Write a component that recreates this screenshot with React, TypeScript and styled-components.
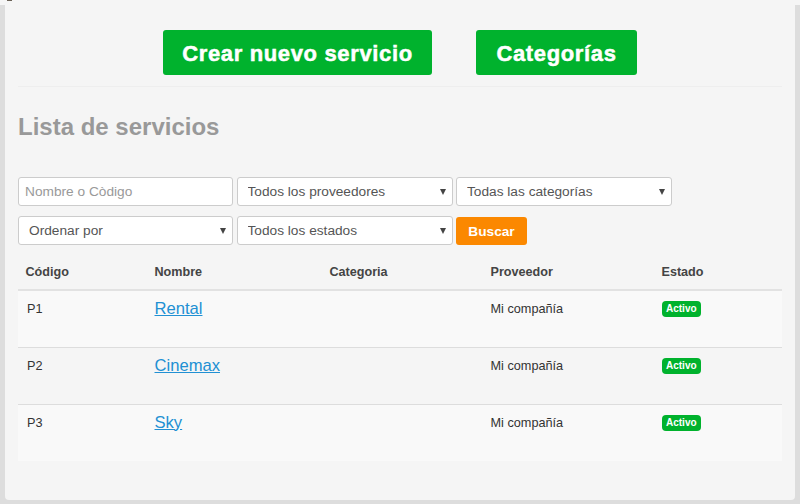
import React from "react";
import styled, { createGlobalStyle } from "styled-components";

const GlobalStyle = createGlobalStyle`
  html, body {
    margin: 0;
    padding: 0;
    height: 100%;
    background: #dddddd;
    font-family: "Liberation Sans", Arial, sans-serif;
  }
`;

const TopStrip = styled.div`
  height: 5px;
  padding-left: 7px;
  background: #f5f5f5;
`;

const TopTick = styled.div`
  width: 5px;
  height: 1px;
  background: #6b6257;
`;

const Panel = styled.div`
  box-sizing: border-box;
  width: 790px;
  height: 495px;
  margin: 0 5px;
  padding: 25px 13px 0;
  background: #f5f5f5;
  border-radius: 0 0 4px 4px;
`;

const Actions = styled.div`
  display: flex;
  justify-content: center;
  gap: 44px;
  padding-bottom: 11px;
  padding-right: 1px;
  border-bottom: 1px solid #eeeeee;
`;

const BigButton = styled.button<{ $width: number }>`
  width: ${(p) => p.$width}px;
  height: 45px;
  padding: 2px 0 0 1px;
  border: 0;
  border-radius: 3px;
  background: #00b22d;
  color: #ffffff;
  font: bold 22px "Liberation Sans", Arial, sans-serif;
  letter-spacing: 0.65px;
  -webkit-text-stroke: 0.5px #ffffff;
`;

const Title = styled.h2`
  margin: 25px 0 36px;
  font-size: 24px;
  line-height: 29px;
  font-weight: bold;
  color: #999999;
`;

const Filters = styled.div`
  display: grid;
  grid-template-columns: 215px 216px 216px;
  grid-auto-rows: 29px;
  column-gap: 3.5px;
  row-gap: 10px;
`;

const SearchInput = styled.input`
  box-sizing: border-box;
  width: 100%;
  height: 29px;
  padding: 0 6px;
  background: #ffffff;
  border: 1px solid #cccccc;
  border-radius: 3px;
  font: 13.7px "Liberation Sans", Arial, sans-serif;
  color: #555555;

  &::placeholder {
    color: #999999;
    opacity: 1;
  }
`;

const SelectBox = styled.div`
  position: relative;

  &::after {
    content: "";
    position: absolute;
    top: 12px;
    right: 7px;
    border-left: 3.5px solid transparent;
    border-right: 3.5px solid transparent;
    border-top: 6px solid #444444;
    pointer-events: none;
  }
`;

const Select = styled.select`
  appearance: none;
  box-sizing: border-box;
  width: 100%;
  height: 29px;
  padding: 0 10px;
  background: #ffffff;
  border: 1px solid #cccccc;
  border-radius: 3px;
  font: 13.7px "Liberation Sans", Arial, sans-serif;
  color: #555555;
`;

const SearchButton = styled.button`
  justify-self: start;
  align-self: end;
  width: 71px;
  height: 28px;
  padding: 0;
  border: 0;
  border-radius: 3px;
  background: #fb8800;
  color: #ffffff;
  font: bold 13.7px "Liberation Sans", Arial, sans-serif;
`;

const Table = styled.table`
  width: 764px;
  border-collapse: collapse;
  table-layout: fixed;
`;

const HeadCell = styled.th<{ $width: number }>`
  width: ${(p) => p.$width}px;
  height: 45px;
  box-sizing: border-box;
  padding: 9px 7.5px 0;
  border-bottom: 2px solid #e2e2e2;
  text-align: left;
  font-size: 12.6px;
  font-weight: bold;
  color: #444444;
`;

const Row = styled.tr<{ $striped: boolean }>`
  background: ${(p) => (p.$striped ? "#f9f9f9" : "transparent")};
`;

const Cell = styled.td<{ $top?: boolean }>`
  height: 57px;
  box-sizing: border-box;
  padding: 9px 7.5px 8px;
  vertical-align: top;
  border-top: ${(p) => (p.$top ? "0" : "1px solid #dddddd")};
  font-size: 12.7px;
  line-height: 17px;
  color: #333333;
`;

const TextCell = styled(Cell)`
  padding-top: 10px;
`;

const CodeText = styled.span`
  padding-left: 1.5px;
`;

const ServiceLink = styled.a`
  font-size: 16.6px;
  color: #2190d3;
  text-decoration: underline;
`;

const Badge = styled.span`
  display: inline-block;
  padding: 0 4.5px;
  height: 16px;
  line-height: 16px;
  border-radius: 4px;
  background: #00b22d;
  color: #ffffff;
  font-size: 10px;
  font-weight: bold;
`;

const services = [
  { code: "P1", name: "Rental" },
  { code: "P2", name: "Cinemax" },
  { code: "P3", name: "Sky" },
];

export default function App() {
  return (
    <>
      <GlobalStyle />
      <TopStrip>
        <TopTick />
      </TopStrip>
      <Panel>
        <Actions>
          <BigButton $width={269}>Crear nuevo servicio</BigButton>
          <BigButton $width={161}>Categorías</BigButton>
        </Actions>
        <Title>Lista de servicios</Title>
        <Filters>
          <SearchInput placeholder="Nombre o Còdigo" />
          <SelectBox>
            <Select defaultValue="p">
              <option value="p">Todos los proveedores</option>
            </Select>
          </SelectBox>
          <SelectBox>
            <Select defaultValue="c">
              <option value="c">Todas las categorías</option>
            </Select>
          </SelectBox>
          <SelectBox>
            <Select defaultValue="o">
              <option value="o">Ordenar por</option>
            </Select>
          </SelectBox>
          <SelectBox>
            <Select defaultValue="e">
              <option value="e">Todos los estados</option>
            </Select>
          </SelectBox>
          <SearchButton>Buscar</SearchButton>
        </Filters>
        <Table>
          <thead>
            <tr>
              <HeadCell $width={129}>Código</HeadCell>
              <HeadCell $width={175}>Nombre</HeadCell>
              <HeadCell $width={161}>Categoria</HeadCell>
              <HeadCell $width={171}>Proveedor</HeadCell>
              <HeadCell $width={128}>Estado</HeadCell>
            </tr>
          </thead>
          <tbody>
            {services.map((s, i) => (
              <Row key={s.code} $striped={i % 2 === 0}>
                <TextCell $top={i === 0}>
                  <CodeText>{s.code}</CodeText>
                </TextCell>
                <Cell $top={i === 0}>
                  <ServiceLink href="#">{s.name}</ServiceLink>
                </Cell>
                <Cell $top={i === 0} />
                <TextCell $top={i === 0}>Mi compañía</TextCell>
                <Cell $top={i === 0}>
                  <Badge>Activo</Badge>
                </Cell>
              </Row>
            ))}
          </tbody>
        </Table>
      </Panel>
    </>
  );
}
